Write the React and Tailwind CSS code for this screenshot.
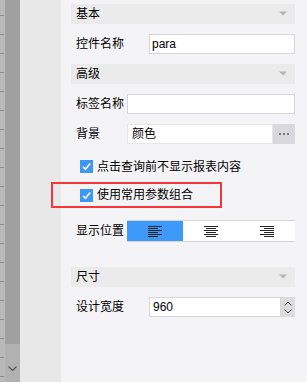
import React from "react";

const font = { fontFamily: '"Liberation Sans", "Noto Sans CJK SC", sans-serif' };

function Header({ title }) {
  return (
    <div className="h-[20px] bg-[#ebebeb] flex items-center justify-between pl-[5px] pr-[7px]">
      <span className="text-[12px] text-[#000] leading-none">{title}</span>
      <svg width="10" height="6" viewBox="0 0 10 6">
        <path d="M1 0.5 H9 L5 4.5 Z" fill="#b5b5b5" />
      </svg>
    </div>
  );
}

function Check() {
  return (
    <div className="w-[13px] h-[13px] bg-[#3d97f5] flex items-center justify-center shrink-0">
      <svg width="11" height="11" viewBox="0 0 11 11">
        <path d="M2 5.8 L4.4 8.2 L9.2 2.6" stroke="white" strokeWidth="1.6" fill="none" />
      </svg>
    </div>
  );
}

function AlignIcon({ kind }) {
  const lines = [0, 1, 2, 3, 4, 5].map((i) => {
    const full = i % 2 === 0;
    const w = full ? 14 : 10;
    let x = 0;
    if (!full) {
      if (kind === "center") x = 2;
      if (kind === "right") x = 4;
    }
    return <rect key={i} x={x} y={i * 2} width={w} height="1" fill="#222" />;
  });
  return (
    <svg width="14" height="11" viewBox="0 0 14 11">
      {lines}
    </svg>
  );
}

export default function App() {
  return (
    <div className="w-[307px] h-[382px] flex overflow-hidden bg-[#f4f4f6]" style={font}>
      {/* ruler */}
      <div className="w-[5px] h-full bg-[#b9b9b9] flex flex-col gap-[18px] pt-[15px]">
        {Array.from({ length: 20 }).map((_, i) => (
          <div key={i} className="h-px w-[4px] bg-[#8a8a8a]" />
        ))}
      </div>
      {/* scrollbar */}
      <div className="w-[15px] h-full flex flex-col bg-[#b1b1b1]">
        <div className="h-[344px] bg-[#a0a0a0]" />
        <div className="flex-1 flex items-start justify-center pt-[22px]">
          <svg width="9" height="6" viewBox="0 0 9 6">
            <path d="M0.5 0.5 L4.5 4.5 L8.5 0.5" stroke="#555" strokeWidth="1.2" fill="none" />
          </svg>
        </div>
      </div>
      {/* gray area */}
      <div className="w-[41px] h-full bg-[#e8e8e8]" />
      {/* panel */}
      <div className="flex-1 pl-[10px] pr-[12px] pt-[4px] flex flex-col text-[12px] text-[#000]">
        <Header title="基本" />
        <div className="mt-[10px] h-[20px] flex items-center">
          <span className="w-[78px] pl-[5px]">控件名称</span>
          <div className="flex-1 h-[20px] bg-white border border-[#d6d6d6] flex items-center pl-[2px]">para</div>
        </div>
        <div className="mt-[10px]">
          <Header title="高级" />
        </div>
        <div className="mt-[10px] h-[20px] flex items-center">
          <span className="w-[56px] pl-[5px]">标签名称</span>
          <div className="flex-1 h-[20px] bg-white border border-[#d6d6d6]" />
        </div>
        <div className="mt-[10px] h-[20px] flex items-center">
          <span className="w-[56px] pl-[5px]">背景</span>
          <div className="flex-1 h-[20px] bg-white border border-[#e6e6e6] flex items-center pl-[4px]">颜色</div>
          <div className="w-[22px] h-[20px] bg-[#d9d9dd] flex items-center justify-center gap-[2px]">
            <div className="w-[2px] h-[2px] bg-[#777]" />
            <div className="w-[2px] h-[2px] bg-[#777]" />
            <div className="w-[2px] h-[2px] bg-[#777]" />
          </div>
        </div>
        <div className="mt-[16px] h-[13px] flex items-center gap-[4px] pl-[9px]">
          <Check />
          <span className="leading-none">点击查询前不显示报表内容</span>
        </div>
        <div className="mt-[9px] -ml-[20px] w-[171px] h-[26px] border-2 border-[#f3363a] flex items-center gap-[4px] pl-[27px]">
          <Check />
          <span className="leading-none">使用常用参数组合</span>
        </div>
        <div className="mt-[12px] h-[22px] flex items-center">
          <span className="w-[56px] pl-[5px]">显示位置</span>
          <div className="flex-1 h-[22px] flex border-y border-[#d4d4d4] bg-white">
            <div className="flex-1 bg-[#3d99fa] flex items-center justify-center">
              <AlignIcon kind="left" />
            </div>
            <div className="flex-1 flex items-center justify-center">
              <AlignIcon kind="center" />
            </div>
            <div className="flex-1 flex items-center justify-center">
              <AlignIcon kind="right" />
            </div>
          </div>
        </div>
        <div className="mt-[25px]">
          <Header title="尺寸" />
        </div>
        <div className="mt-[10px] h-[20px] flex items-center">
          <span className="w-[78px] pl-[5px]">设计宽度</span>
          <div className="flex-1 h-[20px] bg-white border border-[#d6d6d6] flex items-center pl-[3px]">960</div>
          <div className="w-[14px] h-[20px] bg-[#dcdcdc] flex flex-col items-center justify-center gap-[3px]">
            <svg width="8" height="5" viewBox="0 0 8 5">
              <path d="M0.5 4.5 L4 1 L7.5 4.5" stroke="#444" strokeWidth="1" fill="none" />
            </svg>
            <svg width="8" height="5" viewBox="0 0 8 5">
              <path d="M0.5 0.5 L4 4 L7.5 0.5" stroke="#444" strokeWidth="1" fill="none" />
            </svg>
          </div>
        </div>
      </div>
    </div>
  );
}
